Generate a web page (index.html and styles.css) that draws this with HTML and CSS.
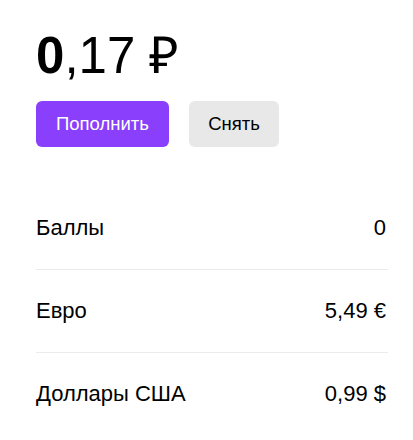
FILE: index.html
```html
<!DOCTYPE html>
<html lang="ru">
<head>
    <meta charset="UTF-8">
    <title>Кошелёк</title>
    <link rel="stylesheet" href="styles.css">
</head>
<body>
<div class="wallet">
    <div class="balance"><b>0</b>,17 ₽</div>
    <div class="actions">
        <button class="btn btn_main">Пополнить</button>
        <button class="btn btn_gray">Снять</button>
    </div>
    <ul class="list">
        <li class="row"><span>Баллы</span><span>0</span></li>
        <li class="row"><span>Евро</span><span>5,49 €</span></li>
        <li class="row"><span>Доллары США</span><span>0,99 $</span></li>
    </ul>
</div>
</body>
</html>
```

FILE: styles.css
```css
body{margin:0;background:#fff;color:#000;font-family:"Liberation Sans",Arial,sans-serif;}
.wallet{padding:28px 25px 0 36px;}
.balance{font-size:51px;line-height:56px;}
.balance b{font-weight:700;}
.actions{display:flex;gap:20px;margin-top:17px;}
.btn{border:0;border-radius:6px;height:46px;padding:0;font-family:inherit;font-size:18.5px;cursor:pointer;}
.btn_main{background:#8a3ffc;color:#fff;width:133px;}
.btn_gray{background:#e8e8e8;color:#000;width:90px;}
.list{list-style:none;margin:40px 0 0;padding:0;}
.row{display:flex;justify-content:space-between;align-items:center;height:82px;font-size:22px;border-bottom:1px solid #ebebeb;}
.row:last-child{border-bottom:0;}
.row span:last-child{padding-right:2px;}
```
